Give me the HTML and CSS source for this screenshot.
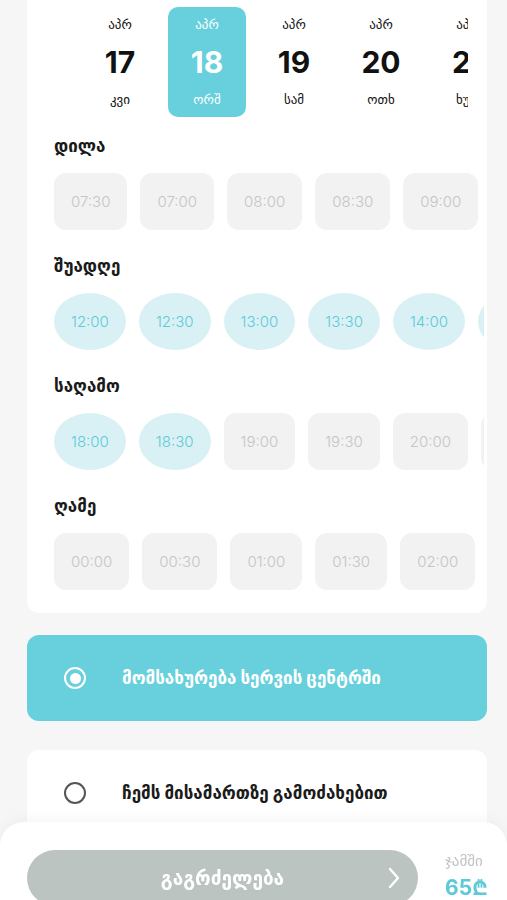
FILE: index.html
```html
<!DOCTYPE html>
<html lang="ka">
<head>
    <meta charset="UTF-8">
    <meta name="viewport" content="width=device-width, initial-scale=1.0">
    <title>ჯავშანი</title>
    <link rel="stylesheet" href="styles.css">
</head>
<body>
    <div class="screen">
        <section class="card">
            <div class="dates">
                <div class="date"><span class="month">აპრ</span><span class="num">17</span><span class="weekday">კვი</span></div>
                <div class="date active"><span class="month">აპრ</span><span class="num">18</span><span class="weekday">ორშ</span></div>
                <div class="date"><span class="month">აპრ</span><span class="num">19</span><span class="weekday">სამ</span></div>
                <div class="date"><span class="month">აპრ</span><span class="num">20</span><span class="weekday">ოთხ</span></div>
                <div class="date"><span class="month">აპრ</span><span class="num">21</span><span class="weekday">ხუთ</span></div>
            </div>

            <div class="periods">
                <div class="period">
                    <h3 class="period-title">დილა</h3>
                    <div class="slots">
                        <span class="slot">07:30</span>
                        <span class="slot">07:00</span>
                        <span class="slot">08:00</span>
                        <span class="slot">08:30</span>
                        <span class="slot">09:00</span>
                        <span class="slot">09:30</span>
                    </div>
                </div>
                <div class="period">
                    <h3 class="period-title">შუადღე</h3>
                    <div class="slots">
                        <span class="slot free">12:00</span>
                        <span class="slot free">12:30</span>
                        <span class="slot free">13:00</span>
                        <span class="slot free">13:30</span>
                        <span class="slot free">14:00</span>
                        <span class="slot free">14:30</span>
                    </div>
                </div>
                <div class="period">
                    <h3 class="period-title">საღამო</h3>
                    <div class="slots">
                        <span class="slot free">18:00</span>
                        <span class="slot free">18:30</span>
                        <span class="slot">19:00</span>
                        <span class="slot">19:30</span>
                        <span class="slot">20:00</span>
                        <span class="slot">20:30</span>
                    </div>
                </div>
                <div class="period">
                    <h3 class="period-title">ღამე</h3>
                    <div class="slots">
                        <span class="slot">00:00</span>
                        <span class="slot">00:30</span>
                        <span class="slot">01:00</span>
                        <span class="slot">01:30</span>
                        <span class="slot">02:00</span>
                        <span class="slot">02:30</span>
                    </div>
                </div>
            </div>
        </section>

        <div class="option selected">
            <span class="radio"></span>
            <span class="option-label">მომსახურება სერვის ცენტრში</span>
        </div>
        <div class="option">
            <span class="radio"></span>
            <span class="option-label">ჩემს მისამართზე გამოძახებით</span>
        </div>
    </div>

    <div class="bottom-sheet">
        <button class="continue">
            <span>გაგრძელება</span>
            <svg class="chevron" width="12" height="22" viewBox="0 0 12 22" fill="none">
                <path d="M2 2 L10 11 L2 20" stroke="#fff" stroke-width="2.4" stroke-linecap="round" stroke-linejoin="round"/>
            </svg>
        </button>
        <div class="total">
            <span class="total-label">ჯამში</span>
            <span class="total-price">65₾</span>
        </div>
    </div>
</body>
</html>
```

FILE: styles.css
```css
body {
    margin: 0;
    background: #f6f6f6;
    font-family: 'Inter', 'DejaVu Sans', sans-serif;
    color: #1b1b1b;
    height: 900px;
    overflow: hidden;
}

.screen {
    padding: 0 20px 0 27px;
}

.card {
    background: #fff;
    border-radius: 0 0 12px 12px;
    padding: 7px 3px 23px 27px;
}

.dates {
    display: flex;
    gap: 9px;
    padding-left: 27px;
    margin-right: 16px;
    overflow: hidden;
}

.date {
    flex-shrink: 0;
    width: 78px;
    height: 110px;
    box-sizing: border-box;
    padding-top: 8px;
    border-radius: 10px;
    display: flex;
    flex-direction: column;
    align-items: center;
    color: #111;
}

.date.active {
    background: #68d0dc;
    color: #fff;
}

.month, .weekday {
    font-size: 13px;
    line-height: 18px;
}

.num {
    font-size: 30px;
    font-weight: 700;
    line-height: 36px;
    margin: 11px 0 10px;
}

.periods {
    margin-top: 19px;
    display: flex;
    flex-direction: column;
    gap: 26px;
}

.period-title {
    margin: 0 0 17px;
    font-size: 17px;
    line-height: 20px;
    font-weight: 700;
    color: #1a1a1a;
}

.slots {
    display: flex;
    gap: 13px;
    overflow: hidden;
}

.slot {
    flex-shrink: 0;
    height: 57px;
    padding: 0 17px;
    display: flex;
    align-items: center;
    border-radius: 12px;
    background: #f2f2f2;
    color: #c5c5c5;
    font-size: 15px;
    font-weight: 300;
}

.slot.free {
    border-radius: 50%;
    background: #d9f1f4;
    color: #5ecad6;
}

.option {
    margin-top: 22px;
    height: 86px;
    border-radius: 12px;
    background: #fff;
    display: flex;
    align-items: center;
    padding-left: 37px;
    gap: 36px;
}

.option + .option {
    margin-top: 29px;
}

.option.selected {
    background: #68d0dc;
    color: #fff;
}

.radio {
    flex-shrink: 0;
    width: 22px;
    height: 22px;
    box-sizing: border-box;
    border-radius: 50%;
    border: 2px solid #555;
    display: flex;
    align-items: center;
    justify-content: center;
}

.option.selected .radio {
    border: 2.5px solid #fff;
}

.option.selected .radio::after {
    content: '';
    width: 11px;
    height: 11px;
    border-radius: 50%;
    background: #fff;
}

.option-label {
    font-size: 17px;
    font-weight: 700;
}

.bottom-sheet {
    position: fixed;
    left: 0;
    right: 0;
    bottom: 0;
    height: 78px;
    background: #fff;
    border-radius: 24px 24px 0 0;
    box-shadow: 0 -3px 14px rgba(0, 0, 0, 0.04);
    padding: 28px 0 0 27px;
    box-sizing: border-box;
    display: flex;
    gap: 27px;
}

.continue {
    flex-shrink: 0;
    width: 391px;
    height: 56px;
    border: none;
    border-radius: 28px;
    background: #bcc4c1;
    color: #fff;
    font-family: inherit;
    font-size: 19px;
    font-weight: 700;
    position: relative;
    display: flex;
    align-items: center;
    justify-content: center;
    padding: 0;
}

.chevron {
    position: absolute;
    right: 18px;
    top: 17px;
}

.total {
    display: flex;
    flex-direction: column;
    padding-top: 2px;
}

.total-label {
    font-size: 15px;
    color: #c2c2c2;
    line-height: 18px;
}

.total-price {
    font-size: 21px;
    font-weight: 700;
    color: #5ecad6;
    line-height: 28px;
    margin-top: 4px;
}
```
